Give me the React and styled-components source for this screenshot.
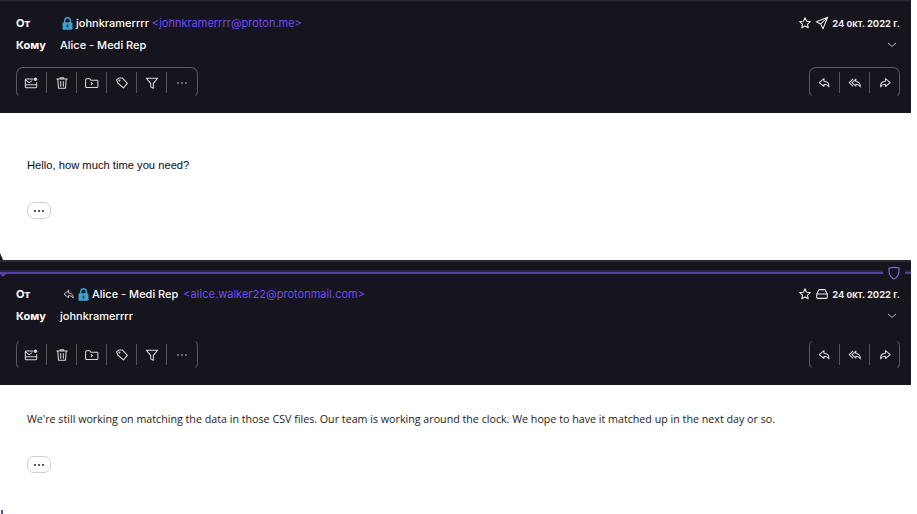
import React from 'react'
import styled, { createGlobalStyle } from 'styled-components'

const GlobalStyle = createGlobalStyle`
  html, body { margin: 0; padding: 0; background: #fff; }
  body { font-family: Inter, "Liberation Sans", sans-serif; }
`

const Icon = ({ size = 14, children }) => (
  <svg width={size} height={size} viewBox="0 0 16 16" fill="none" stroke="currentColor" strokeWidth="1.2" strokeLinejoin="round" strokeLinecap="round">
    {children}
  </svg>
)

const Lock = () => (
  <svg width="11" height="13" viewBox="0 0 11 13">
    <path d="M2.7 6V3.6a2.8 2.8 0 0 1 5.6 0V6" fill="none" stroke="#3f9fd0" strokeWidth="1.5" />
    <rect x=".5" y="5.2" width="10" height="7.6" rx="1.2" fill="#3f9fd0" />
    <rect x="4.7" y="7.6" width="1.6" height="2.8" fill="#10303f" />
  </svg>
)

const Star = () => (
  <Icon size={14}>
    <path d="M8 2l1.8 3.9 4.2.5-3.1 2.9.8 4.2L8 11.4l-3.7 2.1.8-4.2L2 6.4l4.2-.5z" />
  </Icon>
)
const Sent = () => (
  <Icon size={14}>
    <path d="M14.5 1.5L1.5 6.5l5 2.6 2.6 5.4zM14.5 1.5L6.5 9.1" />
  </Icon>
)
const Inbox = () => (
  <Icon size={14}>
    <path d="M4.5 3h7l2.5 5v4a1 1 0 0 1-1 1H3a1 1 0 0 1-1-1V8zM2 8h12" />
  </Icon>
)
const Chevron = () => (
  <Icon size={12}>
    <path d="M3 5.5l5 4.5 5-4.5" />
  </Icon>
)
const MoveInbox = () => (
  <Icon>
    <path d="M10 3.5H2.5a1 1 0 0 0-1 1v8a1 1 0 0 0 1 1h11a1 1 0 0 0 1-1V7.500" />
    <path d="M1.5 10h13M1.800 4.600L5.800 7.600 9 5.600" />
    <circle cx="13" cy="3.800" r="2" fill="currentColor" stroke="none" />
  </Icon>
)
const Trash = () => (
  <Icon>
    <path d="M2 3.5h12M6 3.5V2h4v1.5M3.2 3.5l.8 10.5h8l.8-10.5M6.5 6.2v5.4M9.5 6.2v5.4" />
  </Icon>
)
const Folder = () => (
  <Icon>
    <path d="M1.5 3.2h4l1.2 1.6h7a1 1 0 0 1 1 1v6.4a1 1 0 0 1-1 1h-12a1 1 0 0 1-1-1V4z" />
    <path d="M7 7.5l1.5 1.3L7 10.1" />
  </Icon>
)
const Tag = () => (
  <Icon>
    <path d="M1.8 4.5l3-2.3h3.4l6 6.2-4.6 5.2-6.4-5.6z" />
    <circle cx="5" cy="5.2" r=".6" />
  </Icon>
)
const Filter = () => (
  <Icon>
    <path d="M1.5 2.5h13L9.5 8.4V14l-3-1.6v-4z" />
  </Icon>
)
const Dots = () => (
  <Icon>
    <circle cx="3.5" cy="8" r=".45" fill="currentColor" />
    <circle cx="8" cy="8" r=".45" fill="currentColor" />
    <circle cx="12.5" cy="8" r=".45" fill="currentColor" />
  </Icon>
)
const Reply = ({ size = 14 }) => (
  <Icon size={size}>
    <path d="M8 3L2.5 7.5 8 12V9.4c2.6 0 4.2.6 5.6 3 .4-3.6-1.2-6.2-5.6-6.4z" />
  </Icon>
)
const ReplyAll = () => (
  <Icon>
    <path d="M9 3.5L4.5 7.5 9 11.5V9.4c2.2 0 3.7.6 5 3 .3-3.4-1.4-6-5-6.2zM5.6 3.5L1.4 7.5l4.2 4" />
  </Icon>
)
const Forward = () => (
  <Icon>
    <path d="M8.5 3L14 7.5 8.5 12V9.4c-2.6 0-4.2.6-5.6 3-.4-3.6 1.2-6.2 5.6-6.4z" />
  </Icon>
)

const Shield = () => (
  <svg width="12" height="14" viewBox="0 0 12 14" fill="none" stroke="#7d6fe0" strokeWidth="1.1">
    <path d="M1 2c2.5-.6 7.500-.6 10 0 .4 5-.8 9.300-5 11C1.800 11.300.6 7 1 2z" />
  </svg>
)

const Page = styled.div`
  width: 917px;
  height: 514px;
  overflow: hidden;
  background: #fff;
  position: relative;
`

const Header = styled.header`
  width: 911px;
  height: ${p => p.$height}px;
  box-sizing: border-box;
  background: #16141c;
  border-top: ${p => (p.$divider ? 2 : 1)}px solid #2c2b33;
  color: #fff;
  display: flex;
  flex-direction: column;
`

const Divider = styled.div`
  position: relative;
  margin-top: 10px;
  height: 2px;
  background: #54409f;
  box-shadow: 0 -2px 0 #2a2645;
`

const DividerShield = styled.span`
  position: absolute;
  right: 6px;
  top: -6px;
  width: 22px;
  height: 14px;
  display: flex;
  justify-content: center;
  background: #16141c;
`

const DividerTick = styled.span`
  position: absolute;
  left: 0;
  top: 2px;
  width: 0;
  height: 0;
  border-left: 3px solid transparent;
  border-right: 3px solid transparent;
  border-top: 3px solid #54409f;
`

const Details = styled.div`
  padding: ${p => p.$pad}px 11px 0 16px;
  display: flex;
  flex-direction: column;
  gap: ${p => p.$gap}px;
`

const Row = styled.div`
  display: flex;
  align-items: center;
  height: 16px;
`

const Label = styled.span`
  width: 44px;
  flex: none;
  font-size: 11px;
  font-weight: 700;
`

const Sender = styled.div`
  display: flex;
  align-items: center;
  gap: 3px;
  flex: 1;
  margin-left: 2px;
  font-size: 11px;
  font-weight: 500;
  white-space: nowrap;
`

const SenderIcon = styled.span`
  display: flex;
  color: #c9c8d0;
`

const Address = styled.span`
  color: #6d4aff;
  font-weight: 400;
  margin-left: ${p => p.$offset || 0}px;
  letter-spacing: ${p => p.$spacing || 0}px;
`

const Meta = styled.div`
  display: flex;
  align-items: center;
  gap: 5px;
  color: #e8e8ec;
  font-size: 9.4px;
  font-weight: 700;
  white-space: nowrap;
`

const StatusIcon = styled.span`
  display: flex;
  margin-left: -2px;
  margin-right: -2px;
`

const Recipient = styled.span`
  flex: 1;
  font-size: 11px;
  font-weight: 500;
`

const ChevronBox = styled.span`
  display: flex;
  color: #c9c8d0;
  margin-right: 2px;
`

const Toolbars = styled.div`
  display: flex;
  justify-content: space-between;
  margin: ${p => p.$top}px 11px 0 16px;
`

const Group = styled.div`
  display: flex;
  align-items: center;
  height: 31px;
  box-sizing: border-box;
  border: 1px solid transparent;
  border-left-color: #5a5963;
  border-right-color: #5a5963;
  border-top-color: ${p => (p.$closed ? '#5a5963' : 'transparent')};
  border-radius: 7px;
`

const ToolButton = styled.span`
  width: ${p => (p.$wide ? 31 : 30)}px;
  height: 21px;
  box-sizing: border-box;
  display: flex;
  align-items: center;
  justify-content: center;
  color: ${p => (p.$dim ? '#85848c' : '#d6d5da')};
  border-left: ${p => (p.$first ? 'none' : '1px solid #55545d')};
  margin-left: ${p => (p.$first ? '-1px' : '0')};
`

const Body = styled.section`
  width: 911px;
  height: ${p => p.$height}px;
  box-sizing: border-box;
  padding: ${p => p.$top}px 27px 0;
  position: relative;
`

const Message = styled.p`
  margin: 0;
  color: ${p => p.$color};
  font-family: ${p => p.$font};
  font-size: ${p => p.$size}px;
  line-height: 16px;
  white-space: nowrap;
`

const MoreButton = styled.div`
  width: 24px;
  height: 17px;
  box-sizing: border-box;
  margin-top: ${p => p.$top}px;
  border: 1px solid #cfcfd2;
  border-radius: 7px;
  display: flex;
  align-items: center;
  justify-content: center;
  gap: 2px;
  background: #fff;
`

const Dot = styled.i`
  width: 2px;
  height: 2px;
  background: #26252b;
  border-radius: 50%;
`

const Notch = styled.span`
  position: absolute;
  left: 0;
  bottom: 0;
  width: 0;
  height: 0;
  border-left: 3px solid #16141c;
  border-top: 7px solid transparent;
`

const CornerMark = styled.span`
  position: absolute;
  left: 1px;
  bottom: 0;
  width: 2px;
  height: 4px;
  background: #5b4bb0;
`

const leftTools = [MoveInbox, Trash, Folder, Tag, Filter, Dots]
const rightTools = [Reply, ReplyAll, Forward]

const Tools = ({ items, closed }) => (
  <Group $closed={closed}>
    {items.map((Item, i) => (
      <ToolButton key={i} $first={i === 0} $dim={Item === Dots} $wide={Item === Dots}>
        <Item />
      </ToolButton>
    ))}
  </Group>
)

const Mail = ({ divider, height, pad, gap, toolbarTop, closed, from, to, status }) => (
  <Header $height={height} $divider={divider}>
    {divider && (
      <Divider>
        <DividerTick />
        <DividerShield>
          <Shield />
        </DividerShield>
      </Divider>
    )}
    <Details $pad={pad} $gap={gap}>
      <Row>
        <Label>От</Label>
        {from}
        <Meta>
          <Star />
          <StatusIcon>{status}</StatusIcon>
          <span>24 окт. 2022 г.</span>
        </Meta>
      </Row>
      <Row>
        <Label>Кому</Label>
        <Recipient>{to}</Recipient>
        <ChevronBox>
          <Chevron />
        </ChevronBox>
      </Row>
    </Details>
    <Toolbars $top={toolbarTop}>
      <Tools items={leftTools} closed={closed} />
      <Tools items={rightTools} closed={closed} />
    </Toolbars>
  </Header>
)

export default function App() {
  return (
    <Page>
      <GlobalStyle />
      <Mail
        height={113}
        pad={14}
        gap={6}
        toolbarTop={14}
        closed
        to="Alice - Medi Rep"
        status={<Sent />}
        from={
          <Sender>
            <Lock />
            <span>
              johnkramerrrr <Address>&lt;johnkramerrrr@proton.me&gt;</Address>
            </span>
          </Sender>
        }
      />
      <Body $height={147} $top={44}>
        <Message $font={'"Liberation Sans", sans-serif'} $size={11.2} $color="#0c0b10">
          Hello, how much time you need?
        </Message>
        <MoreButton $top={29}>
          <Dot />
          <Dot />
          <Dot />
        </MoreButton>
        <Notch />
      </Body>
      <Mail
        divider
        height={125}
        pad={12}
        gap={6}
        toolbarTop={15}
        to="johnkramerrrr"
        status={<Inbox />}
        from={
          <Sender>
            <SenderIcon>
              <Reply size={13} />
            </SenderIcon>
            <Lock />
            <span>
              Alice - Medi Rep <Address $offset={2} $spacing={0.03}>&lt;alice.walker22@protonmail.com&gt;</Address>
            </span>
          </Sender>
        }
      />
      <Body $height={129} $top={26}>
        <Message $font={'"Open Sans", sans-serif'} $size={10.7} $color="#1c1b22">
          We're still working on matching the data in those CSV files. Our team is working around the clock. We hope to have it matched up in the next day or so.
        </Message>
        <MoreButton $top={29}>
          <Dot />
          <Dot />
          <Dot />
        </MoreButton>
      </Body>
      <CornerMark />
    </Page>
  )
}
